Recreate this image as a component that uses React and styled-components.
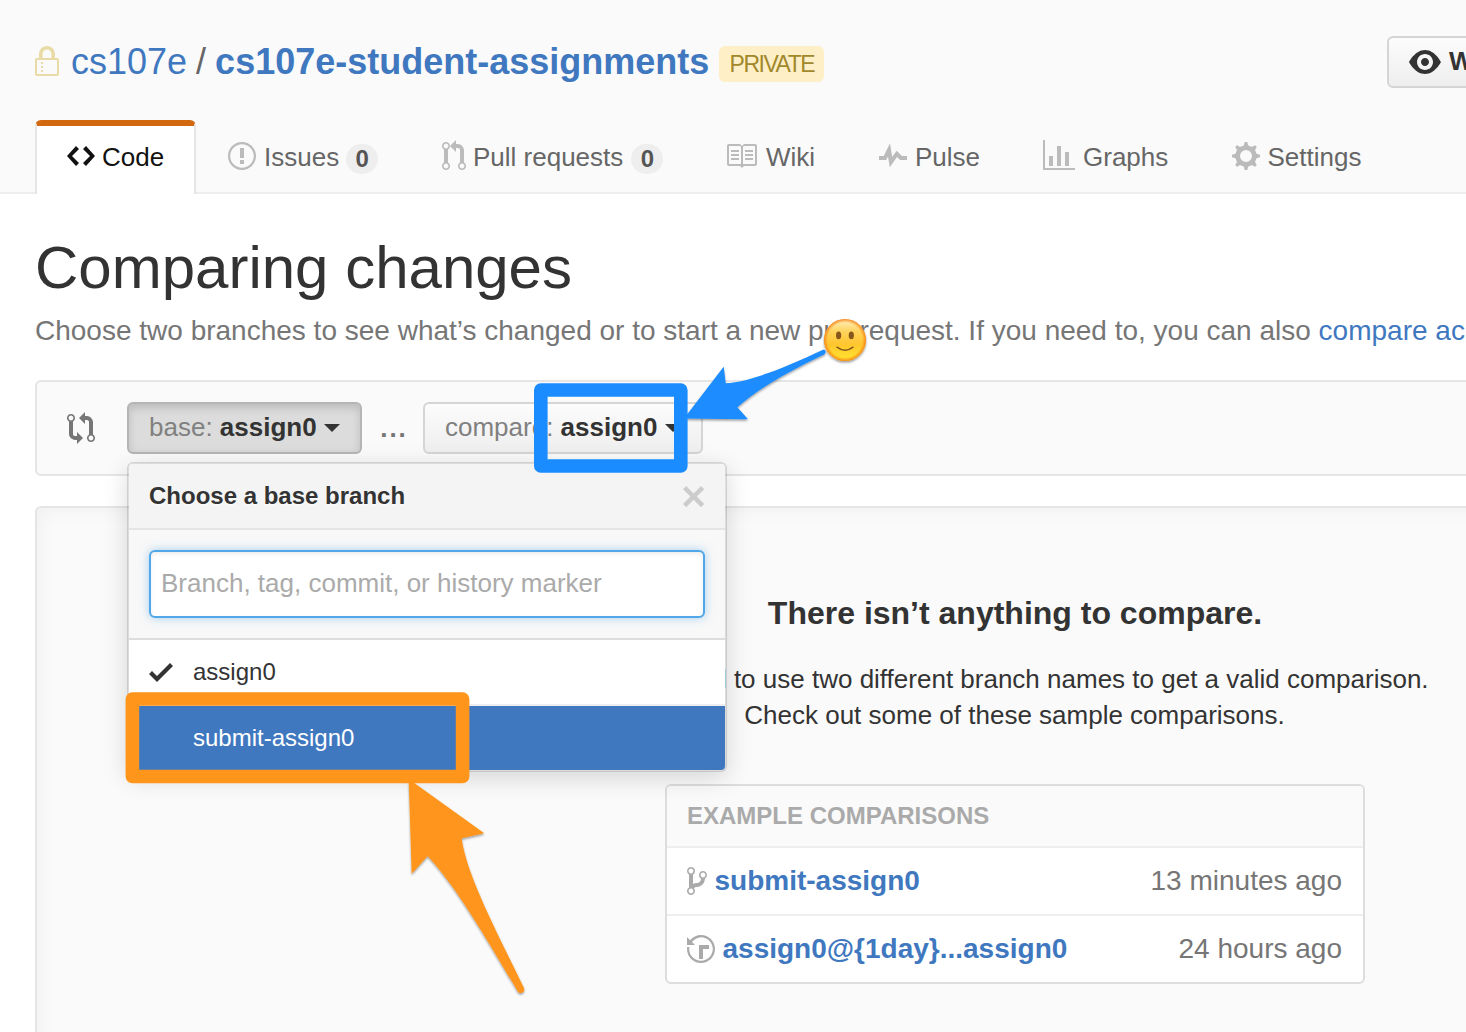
import React from "react";
import styled, { createGlobalStyle, css } from "styled-components";

const Global = createGlobalStyle`
  *, *::before, *::after { box-sizing: border-box; }
  html, body { margin: 0; padding: 0; background: #fff; overflow: hidden; }
  body {
    font-family: "Liberation Sans", Arial, Helvetica, sans-serif;
    font-size: 26px;
    line-height: 36px;
    color: #333;
  }
`;

const paths = {
  lock: "M4 13H3v-1h1v1zm8-6v7c0 .55-.45 1-1 1H1c-.55 0-1-.45-1-1V7c0-.55.45-1 1-1h1V4c0-2.2 1.8-4 4-4s4 1.8 4 4v2h1c.55 0 1 .45 1 1zM3.8 6h4.41V4c0-1.22-.98-2.2-2.2-2.2-1.22 0-2.2.98-2.2 2.2v2H3.8zM11 7H1v7h10V7zM4 8H3v1h1V8zm0 2H3v1h1v-1z",
  code: "M9.5 3L8 4.5 11.5 8 8 11.5 9.5 13 14 8 9.5 3zm-5 0L0 8l4.5 5L6 11.5 2.5 8 6 4.5 4.5 3z",
  issue: "M7 2.1c3.25 0 5.9 2.65 5.9 5.9s-2.65 5.9-5.9 5.9A5.91 5.91 0 0 1 1.1 8c0-3.25 2.65-5.9 5.9-5.9zM7 1C3.14 1 0 4.14 0 8s3.14 7 7 7 7-3.14 7-7-3.14-7-7-7zm1 3H6v5h2V4zm0 6H6v2h2v-2z",
  pull: "M11 11.28V5c-.03-.78-.34-1.47-.94-2.06C9.46 2.35 8.78 2.03 8 2H7V0L4 3l3 3V4h1c.27.02.48.11.69.31.21.2.3.42.31.69v6.28A1.993 1.993 0 0 0 10 15a1.993 1.993 0 0 0 1-3.72zm-1 2.92c-.66 0-1.2-.55-1.2-1.2 0-.65.55-1.2 1.2-1.2.65 0 1.2.55 1.2 1.2 0 .65-.55 1.2-1.2 1.2zM4 3c0-1.11-.89-2-2-2a1.993 1.993 0 0 0-1 3.72v6.56A1.993 1.993 0 0 0 2 15a1.993 1.993 0 0 0 1-3.72V4.72c.59-.34 1-.98 1-1.72zm-.8 10c0 .66-.55 1.2-1.2 1.2-.65 0-1.2-.55-1.2-1.2 0-.65.55-1.2 1.2-1.2.65 0 1.2.55 1.2 1.2zM2 4.2C1.34 4.2.8 3.65.8 3c0-.65.55-1.2 1.2-1.2.65 0 1.2.55 1.2 1.2 0 .65-.55 1.2-1.2 1.2z",
  book: "M3 5h4v1H3V5zm0 3h4V7H3v1zm0 2h4V9H3v1zm11-5h-4v1h4V5zm0 2h-4v1h4V7zm0 2h-4v1h4V9zm2-6v9c0 .55-.45 1-1 1H9.5l-1 1-1-1H2c-.55 0-1-.45-1-1V3c0-.55.45-1 1-1h5.5l1 1 1-1H15c.55 0 1 .45 1 1zm-8 .5L7.5 3H2v9h6V3.5zm7-.5H9.5l-.5.5V12h6V3z",
  pulse: "M11.5 8L8.8 5.4 6.6 8.5 5.5 1.6 2.38 8H0v2h3.6l.9-1.8.9 5.4L9 8.5l1.6 1.5H14V8h-2.5z",
  graph: "M16 14v1H0V0h1v14h15zM5 13H3V8h2v5zm4 0H7V3h2v10zm4 0h-2V6h2v7z",
  eye: "M8.06 2C3 2 0 8 0 8s3 6 8.06 6C13 14 16 8 16 8s-3-6-7.94-6zM8 12c-2.2 0-4-1.78-4-4 0-2.2 1.8-4 4-4 2.22 0 4 1.8 4 4 0 2.22-1.78 4-4 4zm2-4c0 1.11-.89 2-2 2-1.11 0-2-.89-2-2 0-1.11.89-2 2-2 1.11 0 2 .89 2 2z",
  compare: "M5 12H4c-.27-.02-.48-.11-.69-.31-.21-.2-.3-.42-.31-.69V4.72A1.993 1.993 0 0 0 2 1a1.993 1.993 0 0 0-1 3.72V11c.03.78.34 1.47.94 2.06.6.59 1.28.91 2.06.94h1v2l3-3-3-3v2zM2 1.8c.66 0 1.2.55 1.2 1.2 0 .65-.55 1.2-1.2 1.2C1.35 4.2.8 3.65.8 3c0-.65.55-1.2 1.2-1.2zm11 9.48V5c-.03-.78-.34-1.47-.94-2.06-.6-.59-1.28-.91-2.06-.94H9V0L6 3l3 3V4h1c.27.02.48.11.69.31.21.2.3.42.31.69v6.28A1.993 1.993 0 0 0 12 15a1.993 1.993 0 0 0 1-3.72zm-1 2.92c-.66 0-1.2-.55-1.2-1.2 0-.65.55-1.2 1.2-1.2.65 0 1.2.55 1.2 1.2 0 .65-.55 1.2-1.2 1.2z",
  check: "M12 5l-8 8-4-4 1.5-1.5L4 10l6.5-6.5L12 5z",
  close: "M1.6 3L5.3 6.7 9 3l1.6 1.6L6.9 8.3l3.7 3.7L9 13.6 5.3 9.9 1.6 13.6 0 12l3.7-3.7L0 4.6 1.6 3z",
  branch: "M10 5c0-1.11-.89-2-2-2a1.993 1.993 0 0 0-1 3.72v.3c-.02.52-.23.98-.63 1.38-.4.4-.86.61-1.38.63-.83.02-1.48.16-2 .45V4.72a1.993 1.993 0 0 0-1-3.72C.88 1 0 1.89 0 3a2 2 0 0 0 1 1.72v6.56c-.59.35-1 .99-1 1.72 0 1.11.89 2 2 2 1.11 0 2-.89 2-2 0-.53-.2-1-.53-1.36.09-.06.48-.41.59-.47.25-.11.56-.17.94-.17 1.05-.05 1.95-.45 2.75-1.25S8.95 7.77 9 6.73h-.02C9.59 6.37 10 5.73 10 5zM2 1.8c.66 0 1.2.55 1.2 1.2 0 .65-.55 1.2-1.2 1.2C1.35 4.2.8 3.65.8 3c0-.65.55-1.2 1.2-1.2zm0 12.41c-.66 0-1.2-.55-1.2-1.2 0-.65.55-1.2 1.2-1.2.65 0 1.2.55 1.2 1.2 0 .65-.55 1.2-1.2 1.2zm6-8c-.66 0-1.2-.55-1.2-1.2 0-.65.55-1.2 1.2-1.2.65 0 1.2.55 1.2 1.2 0 .65-.55 1.2-1.2 1.2z",
  history: "M8 13H6V6h5v2H8v5zM7 1C4.81 1 2.87 2.02 1.59 3.59L0 2v4h4L2.5 4.5C3.55 3.17 5.17 2.1 7 2.1c3.25 0 5.9 2.65 5.9 5.9s-2.65 5.9-5.9 5.9A5.91 5.91 0 0 1 1.1 8c0-.34.03-.67.09-1H.08C.03 7.33 0 7.66 0 8c0 3.86 3.14 7 7 7s7-3.14 7-7-3.14-7-7-7z",
};

const IconSvg = styled.svg`
  display: block;
  flex: none;
  fill: ${(p) => p.$color || "currentColor"};
`;

const teeth = [0, 45, 90, 135, 180, 225, 270, 315];

function GearShape({ color }) {
  return (
    <g>
      <circle cx="7" cy="8" r="4.15" fill="none" stroke={color} strokeWidth="2.3" />
      {teeth.map((angle) => (
        <path
          key={angle}
          d="M4.9 3.6L6 2.5 6.25 1.3Q6.3 1 6.6 1H7.4Q7.7 1 7.75 1.3L8 2.5 9.1 3.6z"
          transform={`rotate(${angle} 7 8)`}
        />
      ))}
    </g>
  );
}

function Icon({ name, units, start = 0, color }) {
  return (
    <IconSvg width={units * 2} height="32" viewBox={`${start} 0 ${units} 16`} $color={color}>
      {name === "gear" ? <GearShape color={color} /> : <path d={paths[name]} />}
    </IconSvg>
  );
}

const Page = styled.div`
  position: relative;
  width: 100%;
  height: 1032px;
  overflow: hidden;
  background: #fff;
`;

const Header = styled.header`
  width: 2030px;
  height: 194px;
  padding: 36px 35px 0;
  display: flex;
  flex-direction: column;
  justify-content: space-between;
  background: #fafafa;
  border-bottom: 2px solid #eee;
`;

const TitleRow = styled.div`
  display: flex;
  align-items: flex-start;
  height: 52px;
`;

const RepoTitle = styled.h1`
  display: flex;
  align-items: center;
  width: 1352px;
  height: 52px;
  margin: 0;
  font-size: 36px;
  font-weight: 400;
  line-height: 52px;
  white-space: pre;
`;

const LockWrap = styled.span`
  margin: 0 12px 0 0;
  height: 32px;
`;

const RepoLink = styled.a`
  color: #4078c0;
  font-weight: ${(p) => (p.$strong ? 700 : 400)};
`;

const Slash = styled.span`
  padding: 0 9px 0 9px;
  color: #666;
`;

const PrivateLabel = styled.span`
  display: flex;
  align-items: center;
  justify-content: center;
  width: 105px;
  height: 36px;
  margin: 4px 0 0 10px;
  border-radius: 6px;
  background: #ffefc6;
  color: #a1882b;
  font-size: 23px;
  letter-spacing: -1.5px;
`;

const buttonBase = css`
  display: flex;
  align-items: center;
  height: 52px;
  border: 2px solid #d5d5d5;
  border-radius: 6px;
  background: linear-gradient(#fcfcfc, #eee);
  font: 700 26px/36px "Liberation Sans", Arial, sans-serif;
  color: #333;
  white-space: pre;
`;

const WatchButton = styled.button`
  ${buttonBase}
  padding: 0 20px;
  gap: 8px;
`;

const WatchText = styled.span`
  padding-bottom: 2px;
`;

const Tabs = styled.nav`
  display: flex;
  height: 74px;
  margin-bottom: -2px;
`;

const Tab = styled.a`
  display: flex;
  align-items: center;
  height: 74px;
  width: ${(p) => p.$width}px;
  padding: 0 0 2px ${(p) => (p.$active ? 30 : 32)}px;
  color: ${(p) => (p.$active ? "#111" : "#666")};
  ${(p) =>
    p.$active &&
    css`
      border: 2px solid #e5e5e5;
      border-top: 6px solid #d26911;
      border-bottom: 0;
      border-radius: 6px 6px 0 0;
      background: #fff;
      padding-bottom: 8px;
    `}
`;

const TabText = styled.span`
  margin-left: ${(p) => p.$gap}px;
  padding-top: 2px;
`;

const Counter = styled.span`
  margin: 6px 0 0 ${(p) => p.$gap}px;
  width: 32px;
  height: 30px;
  border-radius: 15px;
  background: #eee;
  color: #555;
  font-size: 24px;
  font-weight: 700;
  line-height: 30px;
  text-align: center;
`;

const Main = styled.main`
  width: 2030px;
  padding: 44px 35px 0;
`;

const Heading = styled.h2`
  margin: 0;
  font-size: 60px;
  font-weight: 400;
  line-height: 60px;
`;

const Intro = styled.p`
  margin: 13px 0 0;
  color: #767676;
  font-size: 28px;
  line-height: 40px;
  white-space: nowrap;
  a { color: #4078c0; }
`;

const RangeEditor = styled.section`
  position: relative;
  display: flex;
  align-items: center;
  height: 96px;
  margin-top: 29px;
  padding-left: 30px;
  border: 2px solid #e5e5e5;
  border-radius: 6px;
  background: #fafafa;
  color: #767676;
`;

const BranchButton = styled.button`
  ${buttonBase}
  width: ${(p) => p.$width}px;
  padding: 0 0 2px 20px;
  ${(p) =>
    p.$selected &&
    css`
      border-color: #b5b5b5;
      background: #dcdcdc;
      box-shadow: inset 0 4px 8px rgba(0, 0, 0, 0.15);
    `}
`;

const BranchKind = styled.span`
  color: #808080;
  font-weight: 400;
`;

const Caret = styled.span`
  margin: 2px 0 0 ${(p) => p.$gap}px;
  border: 8px solid transparent;
  border-top-color: #333;
  border-bottom: 0;
`;

const BaseSlot = styled.div`
  margin-left: 32px;
`;

const Dots = styled.span`
  width: 61px;
  padding-left: 3px;
  font-weight: 700;
  letter-spacing: 2px;
  text-align: center;
`;

const Menu = styled.div`
  position: absolute;
  top: 80px;
  left: 90px;
  z-index: 2;
  width: 600px;
  border: 2px solid rgba(0, 0, 0, 0.12);
  border-radius: 6px;
  background: #fff;
  background-clip: padding-box;
  box-shadow: 0 6px 24px rgba(0, 0, 0, 0.15);
  color: #333;
  font-size: 24px;
`;

const MenuHeader = styled.div`
  display: flex;
  align-items: center;
  justify-content: space-between;
  height: 66px;
  padding: 0 21px 0 20px;
  border-bottom: 2px solid #e5e5e5;
  border-radius: 4px 4px 0 0;
  background: #f4f4f4;
  font-weight: 700;
  text-shadow: 0 2px 0 rgba(255, 255, 255, 0.5);
`;

const FilterArea = styled.div`
  height: 110px;
  padding: 20px;
  border-bottom: 2px solid #ddd;
  background: #f8f8f8;
`;

const FilterInput = styled.input`
  display: block;
  width: 556px;
  height: 68px;
  padding: 0 10px 2px;
  border: 2px solid #51a7e8;
  border-radius: 6px;
  outline: none;
  background: #fff;
  box-shadow: inset 0 2px 4px rgba(0, 0, 0, 0.075), 0 0 10px rgba(81, 167, 232, 0.5);
  font: 26px/36px "Liberation Sans", Arial, sans-serif;
  &::placeholder { color: #aaa; opacity: 1; }
`;

const MenuItem = styled.div`
  display: flex;
  align-items: center;
  height: ${(p) => (p.$active ? 64 : 66)}px;
  padding-left: ${(p) => (p.$active ? 64 : 20)}px;
  gap: 20px;
  border-bottom: ${(p) => (p.$active ? 0 : "2px solid #eee")};
  border-radius: ${(p) => (p.$active ? "0 0 4px 4px" : 0)};
  background: ${(p) => (p.$active ? "#4078c0" : "#fff")};
  color: ${(p) => (p.$active ? "#fff" : "#333")};
`;

const Blankslate = styled.section`
  display: flex;
  flex-direction: column;
  align-items: center;
  height: 640px;
  margin-top: 30px;
  padding-top: 81px;
  border: 2px solid #e5e5e5;
  border-radius: 6px;
  background: #fafafa;
  box-shadow: inset 0 0 20px rgba(0, 0, 0, 0.05);
`;

const BlankTitle = styled.h3`
  margin: 0;
  font-size: 32px;
  line-height: 48px;
`;

const BlankText = styled.p`
  width: 860px;
  margin: 24px 0 0;
  padding-right: 1px;
  text-align: center;
`;

const Examples = styled.div`
  width: 700px;
  margin-top: 51px;
  border: 2px solid #ddd;
  border-radius: 6px;
  overflow: hidden;
  background: #fff;
`;

const ExamplesTitle = styled.div`
  height: 60px;
  padding-left: 20px;
  background: #fafafa;
  color: #aaa;
  font-size: 24px;
  font-weight: 700;
  line-height: 60px;
`;

const ExampleRow = styled.div`
  display: flex;
  align-items: center;
  height: 68px;
  padding: 0 21px 0 20px;
  border-top: 2px solid #eee;
  color: #767676;
  font-size: 28px;
`;

const ExampleLink = styled.a`
  flex: 1;
  margin-left: 7.5px;
  color: #4078c0;
  font-weight: 700;
`;

const Annotations = styled.svg`
  position: absolute;
  inset: 0;
  z-index: 5;
  pointer-events: none;
`;

const tabs = [
  { icon: "issue", units: 14, label: "Issues", gap: 8, count: 0, countGap: 7, width: 214 },
  { icon: "pull", units: 12, label: "Pull requests", gap: 7, count: 0, countGap: 8, width: 285 },
  { icon: "book", units: 15, start: 1, label: "Wiki", gap: 9, width: 152 },
  { icon: "pulse", units: 14, label: "Pulse", gap: 8, width: 164 },
  { icon: "graph", units: 16, label: "Graphs", gap: 8, width: 189 },
  { icon: "gear", units: 14, label: "Settings", gap: 7.5, width: 200 },
];

export default function App() {
  return (
    <Page>
      <Global />
      <Header>
        <TitleRow>
          <RepoTitle>
            <LockWrap><Icon name="lock" units={12} color="#e9dba5" /></LockWrap>
            <RepoLink>cs107e</RepoLink>
            <Slash>/</Slash>
            <RepoLink $strong>cs107e-student-assignments</RepoLink>
            <PrivateLabel>PRIVATE</PrivateLabel>
          </RepoTitle>
          <WatchButton><Icon name="eye" units={16} /><WatchText>Watch</WatchText></WatchButton>
        </TitleRow>
        <Tabs>
          <Tab $active $width={161}>
            <Icon name="code" units={14} />
            <TabText $gap={7}>Code</TabText>
          </Tab>
          {tabs.map((t) => (
            <Tab key={t.label} $width={t.width}>
              <Icon name={t.icon} units={t.units} start={t.start} color="#bbb" />
              <TabText $gap={t.gap}>{t.label}</TabText>
              {t.count !== undefined && <Counter $gap={t.countGap}>{t.count}</Counter>}
            </Tab>
          ))}
        </Tabs>
      </Header>
      <Main>
        <Heading>Comparing changes</Heading>
        <Intro>
          Choose two branches to see what’s changed or to start a new pull request. If you need to, you can also <a>compare across forks</a>.
        </Intro>
        <RangeEditor>
          <Icon name="compare" units={14} />
          <BaseSlot>
            <BranchButton $selected $width={235}>
              <BranchKind>base: </BranchKind>assign0<Caret $gap={7} />
            </BranchButton>
          </BaseSlot>
          <Dots>...</Dots>
          <BranchButton $width={280}>
            <BranchKind>compare: </BranchKind>assign0<Caret $gap={8} />
          </BranchButton>
          <Menu>
            <MenuHeader>
              Choose a base branch
              <Icon name="close" units={10.6} color="#ccc" />
            </MenuHeader>
            <FilterArea>
              <FilterInput placeholder="Branch, tag, commit, or history marker" />
            </FilterArea>
            <MenuItem><Icon name="check" units={12} />assign0</MenuItem>
            <MenuItem $active>submit-assign0</MenuItem>
          </Menu>
        </RangeEditor>
        <Blankslate>
          <BlankTitle>There isn’t anything to compare.</BlankTitle>
          <BlankText>
            You’ll need to use two different branch names to get a valid comparison.
            <br />
            Check out some of these sample comparisons.
          </BlankText>
          <Examples>
            <ExamplesTitle>EXAMPLE COMPARISONS</ExamplesTitle>
            <ExampleRow>
              <Icon name="branch" units={10} color="#aaa" />
              <ExampleLink>submit-assign0</ExampleLink>
              13 minutes ago
            </ExampleRow>
            <ExampleRow>
              <Icon name="history" units={14} color="#aaa" />
              <ExampleLink>assign0@&#123;1day&#125;...assign0</ExampleLink>
              24 hours ago
            </ExampleRow>
          </Examples>
        </Blankslate>
      </Main>
      <Annotations width="1466" height="1032" viewBox="0 0 1466 1032">
        <defs>
          <filter id="drop" x="-10%" y="-10%" width="120%" height="125%">
            <feDropShadow dx="0" dy="1.5" stdDeviation="1" floodColor="#000" floodOpacity="0.4" />
          </filter>
          <linearGradient id="face" x1="0" y1="0" x2="0" y2="1">
            <stop offset="0" stopColor="#fff0c0" />
            <stop offset="0.3" stopColor="#ffd35c" />
            <stop offset="0.6" stopColor="#ffc52e" />
            <stop offset="1" stopColor="#ffe62c" />
          </linearGradient>
          <radialGradient id="rim">
            <stop offset="0.82" stopColor="#f8931d" stopOpacity="0" />
            <stop offset="1" stopColor="#f5851c" stopOpacity="1" />
          </radialGradient>
        </defs>
        <path filter="url(#drop)" fill="#1a8cff" d="M684 418.5L723.7 366.7L725.7 383.3C751 382 791 365 822.5 350C826 349 827 353.5 823 355C790 371 757 389 737.3 407.3L748 419.3Z" />
        <rect x="540.8" y="390" width="140" height="76" fill="none" stroke="#1a8cff" strokeWidth="13.6" strokeLinejoin="round" />
        <path filter="url(#drop)" fill="#ff951a" d="M408.7 779L484.3 833.3L461.7 838.3C466 875 500 938 524 988C525.5 992.5 520 995 517.5 991C495 954 461 892 427.7 856L411.7 873.7Z" />
        <rect x="132.4" y="699" width="330.2" height="77.5" fill="none" stroke="#ff951a" strokeWidth="13.6" strokeLinejoin="round" />
        <g filter="url(#drop)">
          <circle cx="845" cy="340" r="21" fill="url(#face)" />
          <circle cx="845" cy="340" r="21" fill="url(#rim)" />
        </g>
        <ellipse cx="838.6" cy="335.4" rx="2.6" ry="3.8" fill="#85571a" />
        <ellipse cx="851.3" cy="335.4" rx="2.6" ry="3.8" fill="#85571a" />
        <path d="M837 347.2Q845 353.5 853 347.2" fill="none" stroke="#85571a" strokeWidth="1.5" strokeLinecap="round" />
      </Annotations>
    </Page>
  );
}
